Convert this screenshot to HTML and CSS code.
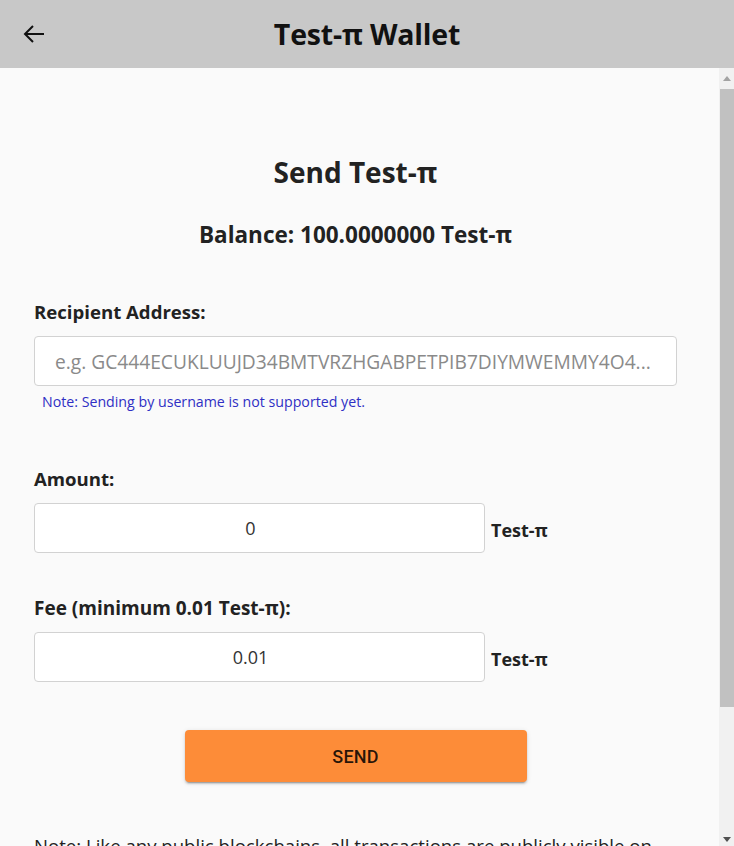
FILE: index.html
```html
<!DOCTYPE html>
<html lang="en">
<head>
<meta charset="utf-8">
<title>Test-π Wallet</title>
<link rel="stylesheet" href="styles.css">
</head>
<body>
<header class="topbar">
  <button class="back" aria-label="Back">
    <svg width="22" height="20" viewBox="0 0 22 20" aria-hidden="true">
      <path d="M21 10H2.5M10 2L2 10l8 8" fill="none" stroke="#111" stroke-width="2" stroke-linecap="butt" stroke-linejoin="miter"/>
    </svg>
  </button>
  <h1 class="title">Test-π Wallet</h1>
</header>
<div class="body-row">
  <main class="scroller">
    <div class="content">
      <h2 class="heading">Send Test-π</h2>
      <p class="balance">Balance: 100.0000000 Test-π</p>

      <label class="label" for="recipient">Recipient Address:</label>
      <input class="field field-wide" id="recipient" type="text" placeholder="e.g. GC444ECUKLUUJD34BMTVRZHGABPETPIB7DIYMWEMMY4O4...">
      <p class="hint">Note: Sending by username is not supported yet.</p>

      <label class="label label-amount" for="amount">Amount:</label>
      <div class="row">
        <input class="field field-num" id="amount" type="text" value="0">
        <span class="unit">Test-π</span>
      </div>

      <label class="label label-fee" for="fee">Fee (minimum 0.01 Test-π):</label>
      <div class="row">
        <input class="field field-num" id="fee" type="text" value="0.01">
        <span class="unit">Test-π</span>
      </div>

      <div class="actions">
        <button class="send" type="button">SEND</button>
      </div>

      <p class="footnote">Note: Like any public blockchains, all transactions are publicly visible on the blockchain explorer.</p>
    </div>
  </main>
  <div class="rail" aria-hidden="true">
    <span class="rail-btn"><span class="tri tri-up"></span></span>
    <span class="rail-thumb"></span>
    <span class="rail-track"></span>
    <span class="rail-btn"><span class="tri tri-down"></span></span>
  </div>
</div>
</body>
</html>
```

FILE: styles.css
```css
* { box-sizing: border-box; }
html, body { margin: 0; padding: 0; height: 100%; }
body {
  font-family: "Open Sans", "Noto Sans", "DejaVu Sans", sans-serif;
  color: #212121;
  background: #fafafa;
  display: flex;
  flex-direction: column;
  overflow: hidden;
}
.topbar {
  flex: 0 0 68px;
  height: 68px;
  background: #c8c8c8;
  display: flex;
  align-items: center;
  justify-content: center;
  position: relative;
}
.back {
  position: absolute;
  left: 23px;
  top: 24px;
  width: 22px;
  height: 20px;
  padding: 0;
  border: 0;
  background: none;
  display: flex;
}
.title {
  margin: 0;
  font-size: 28.5px;
  font-weight: 700;
  color: #111;
  line-height: 36px;
  letter-spacing: -0.2px;
}
.body-row {
  flex: 1 1 auto;
  min-height: 0;
  display: flex;
}
.scroller {
  flex: 1 1 auto;
  min-width: 0;
  overflow-y: auto;
  scrollbar-width: none;
  background: #fafafa;
}
.scroller::-webkit-scrollbar { display: none; }
.rail {
  flex: 0 0 15px;
  display: flex;
  flex-direction: column;
  background: #f1f1f1;
}
.rail-btn {
  flex: 0 0 17px;
  display: flex;
  align-items: center;
  justify-content: center;
}
.tri {
  width: 0;
  height: 0;
  border-left: 4px solid transparent;
  border-right: 4px solid transparent;
}
.tri-up { border-bottom: 5px solid #a3a3a3; margin-top: 4px; }
.tri-down { border-top: 5px solid #505050; margin-top: 4px; }
.rail-thumb {
  flex: 0 0 618px;
  margin-top: 4px;
  margin-left: 1px;
  background: #c1c1c1;
}
.rail-track { flex: 1 1 auto; }
.content {
  padding: 86px 42px 116px 34px;
  display: flex;
  flex-direction: column;
}
.heading {
  margin: 0;
  text-align: center;
  font-size: 28px;
  line-height: 36px;
  font-weight: 700;
  color: #222;
}
.balance {
  margin: 31px 0 0;
  text-align: center;
  font-size: 22.5px;
  line-height: 28px;
  font-weight: 700;
  color: #222;
}
.label {
  margin-top: 51px;
  font-size: 18.6px;
  line-height: 24px;
  font-weight: 700;
  color: #222;
}
.label-amount { margin-top: 55px; }
.label-fee { margin-top: 43px; font-size: 19px; }
.field {
  margin-top: 12px;
  height: 50px;
  border: 1px solid #d2d2d2;
  border-radius: 4px;
  background: #fff;
  font-family: inherit;
  font-size: 18px;
  color: #333;
  outline: none;
}
.field-wide {
  width: 100%;
  padding: 0 20px;
  font-size: 19.2px;
}
.field-wide::placeholder { color: #8a8a8a; }
.row {
  display: flex;
  align-items: center;
  gap: 6px;
  margin-top: 12px;
}
.row .field { margin-top: 0; }
.field-num {
  width: 451px;
  text-align: center;
  padding: 0 18px 0 0;
}
.unit {
  font-size: 18px;
  font-weight: 700;
  color: #222;
  padding-top: 4px;
}
.hint {
  margin: 6px 0 0 8px;
  font-size: 14.2px;
  line-height: 20px;
  color: #2f2fc4;
}
.actions {
  margin-top: 48px;
  display: flex;
  justify-content: center;
}
.send {
  width: 342px;
  height: 52px;
  border: 0;
  border-radius: 4px;
  background: #fd8c38;
  color: rgba(0,0,0,0.85);
  font-family: Roboto, "Liberation Sans", sans-serif;
  font-size: 18px;
  font-weight: 500;
  letter-spacing: 0.2px;
  box-shadow: 0 3px 1px -2px rgba(0,0,0,0.2), 0 2px 2px 0 rgba(0,0,0,0.14), 0 1px 5px 0 rgba(0,0,0,0.12);
}
.footnote {
  margin: 51px 0 0;
  font-size: 18.6px;
  line-height: 26px;
  color: #222;
}
```
